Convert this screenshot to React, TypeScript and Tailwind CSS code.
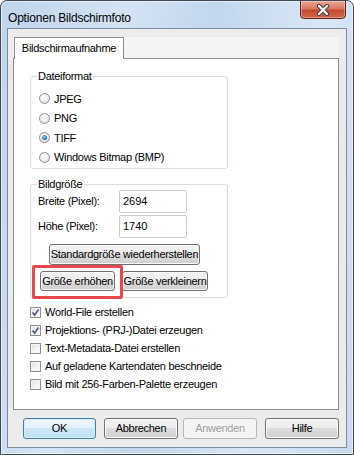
import type { ReactNode } from 'react'

const font = "font-['Liberation_Sans',Arial,sans-serif]"

function Button({
  children,
  className = '',
  variant = 'normal',
}: {
  children: ReactNode
  className?: string
  variant?: 'normal' | 'default' | 'disabled'
}) {
  const look =
    variant === 'default'
      ? 'border-[#3c7fb1] bg-[linear-gradient(#eef7fd_0%,#e2f1fb_50%,#cbe7f7_50%,#bfe0f4_100%)] shadow-[inset_0_0_0_1px_#d6eefc] text-black'
      : variant === 'disabled'
        ? 'border-[#b5b8bb] bg-[#f4f4f4] text-[#a0a0a0]'
        : 'border-[#707070] bg-[linear-gradient(#f3f3f3_0%,#ececec_50%,#dddddd_50%,#cfcfcf_100%)] shadow-[inset_0_0_0_1px_#fbfbfb] text-black'
  return (
    <div
      className={`flex items-center justify-center rounded-[3px] border text-[11px] font-normal tracking-[-0.3px] leading-none ${look} ${className}`}
    >
      {children}
    </div>
  )
}

function Radio({ label, checked = false }: { label: string; checked?: boolean }) {
  return (
    <div className="flex h-[19.5px] items-center gap-[4px]">
      <span className="flex h-[11px] w-[11px] items-center justify-center rounded-full border border-[#8e8f8f] bg-[radial-gradient(circle_at_40%_35%,#ffffff_0%,#ececec_55%,#cdcdcd_100%)]">
        {checked && (
          <span className="h-[5px] w-[5px] rounded-full bg-[radial-gradient(circle_at_40%_35%,#9fd3f7_0%,#2d7cc0_55%,#0f3e73_100%)]" />
        )}
      </span>
      <span className="text-[11px] tracking-[-0.3px]">{label}</span>
    </div>
  )
}

function Checkbox({ label, checked = false }: { label: string; checked?: boolean }) {
  return (
    <div className="flex h-[18px] items-center gap-[4px]">
      <span className="flex h-[11px] w-[11px] items-center justify-center border border-[#8e8f8f] bg-[linear-gradient(135deg,#dcdcdc_0%,#f6f6f6_60%,#ffffff_100%)] shadow-[inset_0_0_0_1px_#f4f4f4]">
        {checked && (
          <svg width="9" height="9" viewBox="0 0 9 9">
            <path d="M1.5 4.5 L3.6 7 L7.6 1.5" fill="none" stroke="#4b5f86" strokeWidth="1.7" />
          </svg>
        )}
      </span>
      <span className="text-[11px] tracking-[-0.3px]">{label}</span>
    </div>
  )
}

function Group({ title, children, className = '' }: { title: string; children: ReactNode; className?: string }) {
  return (
    <div className={`relative w-[198px] rounded-[3px] border border-[#d5dfe5] ${className}`}>
      <span className="absolute -top-[7px] left-[6px] bg-white px-[1px] text-[11px] leading-[13px] tracking-[-0.3px]">
        {title}
      </span>
      {children}
    </div>
  )
}

export default function App() {
  return (
    <div className={`h-[455px] w-[354px] bg-white text-black ${font}`}>
      <div className="flex h-full w-full flex-col overflow-hidden rounded-t-[7px] border border-[#3e4754] bg-[linear-gradient(100deg,#bfd5ec_0%,#d3e3f4_30%,#c2d7ed_50%,#d9e7f6_75%,#c7daef_100%)] shadow-[inset_0_0_0_1px_rgba(255,255,255,0.55)]">
        {/* Title bar */}
        <div className="flex h-[27px] shrink-0 items-start">
          <span className="ml-[7px] mt-[8px] text-[12px] tracking-[-0.2px] text-black">
            Optionen Bildschirmfoto
          </span>
          <div className="-mt-[1px] ml-auto mr-[7px] flex h-[19px] w-[46px] items-center justify-center rounded-b-[4px] border border-[#5e2116] bg-[linear-gradient(#e8a795_0%,#d9775f_45%,#c44a2f_55%,#d0674a_100%)] shadow-[inset_0_0_0_1px_rgba(255,255,255,0.35)]">
            <svg width="16" height="12" viewBox="0 0 16 12">
              <path d="M4 2 L12 10 M12 2 L4 10" stroke="#3a3a3a" strokeWidth="4.2" strokeLinecap="round" />
              <path d="M4 2 L12 10 M12 2 L4 10" stroke="#ffffff" strokeWidth="2.4" strokeLinecap="round" />
            </svg>
          </div>
        </div>

        {/* Client area */}
        <div className="mx-[6px] h-[420px] shrink-0 border border-[#7d8b9b] bg-[#ececec] pl-[5px] pt-[8px]">
          <div className="w-[326px]">
            {/* Tab strip */}
            <div className="flex h-[21px] bg-[#f4f4f4]">
              <div className="relative z-10 ml-[1px] flex h-[22px] w-[110px] items-center justify-center border border-b-0 border-[#898c95] bg-white text-[11px] tracking-[-0.3px]">
                Bildschirmaufnahme
              </div>
            </div>

            {/* Tab panel */}
            <div className="h-[352px] border border-[#898c95] bg-white pl-[16px]">
              <Group title="Dateiformat" className="mt-[17px] pb-[1px] pl-[8px] pt-[12px]">
                <Radio label="JPEG" />
                <Radio label="PNG" />
                <Radio label="TIFF" checked />
                <Radio label="Windows Bitmap (BMP)" />
              </Group>

              <Group title="Bildgröße" className="mt-[15px] pb-[6px] pl-[7px] pt-[5px]">
                <div className="flex items-center">
                  <span className="w-[81px] text-[11px] tracking-[-0.3px]">Breite (Pixel):</span>
                  <div className="flex h-[23px] w-[68px] items-center rounded-[2px] border border-[#c6cad1] pl-[3px] text-[11px]">
                    2694
                  </div>
                </div>
                <div className="mt-[2px] flex items-center">
                  <span className="w-[81px] text-[11px] tracking-[-0.3px]">Höhe (Pixel):</span>
                  <div className="flex h-[23px] w-[68px] items-center rounded-[2px] border border-[#c6cad1] pl-[3px] text-[11px]">
                    1740
                  </div>
                </div>
                <Button className="ml-[11px] mt-[6px] h-[21px] w-[151px]">Standardgröße wiederherstellen</Button>
                <div className="mt-[6px] flex gap-[7px] pl-[2px]">
                  <Button className="h-[20px] w-[75px]">Größe erhöhen</Button>
                  <Button className="h-[20px] w-[86px]">Größe verkleinern</Button>
                </div>

                {/* highlight annotation */}
                <div className="absolute left-[1px] top-[80px] h-[34px] w-[91px] rounded-[2px] border-[3px] border-[#e8484b]" />
              </Group>

              <div className="mt-[5px]">
                <Checkbox label="World-File erstellen" checked />
                <Checkbox label="Projektions- (PRJ-)Datei erzeugen" checked />
                <Checkbox label="Text-Metadata-Datei erstellen" />
                <Checkbox label="Auf geladene Kartendaten beschneide" />
                <Checkbox label="Bild mit 256-Farben-Palette erzeugen" />
              </div>
            </div>
          </div>

          {/* Dialog buttons */}
          <div className="mt-[8px] flex pl-[10px]">
            <Button variant="default" className="h-[21px] w-[73px]">OK</Button>
            <Button className="ml-[8px] h-[21px] w-[74px]">Abbrechen</Button>
            <Button variant="disabled" className="ml-[5px] h-[21px] w-[74px]">Anwenden</Button>
            <Button className="ml-[8px] h-[21px] w-[74px]">Hilfe</Button>
          </div>
        </div>
      </div>
    </div>
  )
}
